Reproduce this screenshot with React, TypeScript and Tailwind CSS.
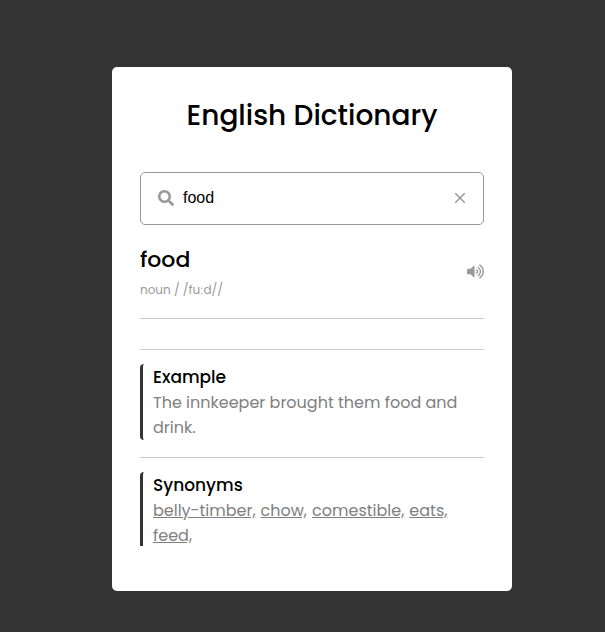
import { FaSearch, FaVolumeUp } from "react-icons/fa";
import { MdClose } from "react-icons/md";

const synonyms = ["belly-timber,", "chow,", "comestible,", "eats,", "feed,"];

export default function App() {
  return (
    <div className="flex h-[632px] w-[605px] justify-center overflow-hidden bg-[#333333] pl-[19px] pt-[67px] font-['Poppins','Inter',sans-serif] text-black">
      <main className="h-[524px] w-[400px] rounded-[5px] bg-white px-7 pt-7">
        <h1 className="h-[42px] whitespace-nowrap text-center text-[28px] font-medium leading-[42px]">
          English Dictionary
        </h1>
        <div className="mt-[35px] flex h-[53px] items-center rounded-[5px] border border-[#999999] pb-[2px] pl-[17px] pr-[14px] text-[#999999]">
          <FaSearch className="size-4" />
          <input
            className="ml-[9px] min-w-0 flex-1 bg-transparent font-['Liberation_Sans',Arial,sans-serif] text-base text-black outline-none"
            defaultValue="food"
            aria-label="Search"
          />
          <MdClose className="size-[18px]" />
        </div>
        <section className="flex h-[94px] items-center justify-between border-b border-[#cccccc]">
          <div className="pt-[2px]">
            <p className="text-[22px] font-medium leading-[33px]">food</p>
            <span className="block text-xs leading-[27px] text-[#999999]">noun / /fuːd//</span>
          </div>
          <FaVolumeUp className="h-[15px] w-[17px] text-[#999999]" />
        </section>
        <section className="mt-[30px] border-t border-[#cccccc] pt-[14px]">
          <div className="h-[76px] rounded-[4px] border-l-[3px] border-[#333333] pl-[10px] pt-px text-base leading-[25px]">
            <p className="text-[17px] font-medium leading-[25px]">Example</p>
            <p className="whitespace-nowrap text-[#808080]">
              The innkeeper brought them food and
              <br />
              drink.
            </p>
          </div>
        </section>
        <section className="mt-[17px] h-[89px] overflow-hidden border-t border-[#cccccc] pt-[14px]">
          <div className="h-[77px] rounded-[4px] border-l-[3px] border-[#333333] pl-[10px] pt-px text-base leading-[25px]">
            <p className="text-[17px] font-medium leading-[25px]">Synonyms</p>
            <div className="flex flex-wrap gap-x-[5px] text-[#808080]">
              {synonyms.map((word) => (
                <span key={word} className="underline">
                  {word}
                </span>
              ))}
            </div>
          </div>
        </section>
      </main>
    </div>
  );
}
